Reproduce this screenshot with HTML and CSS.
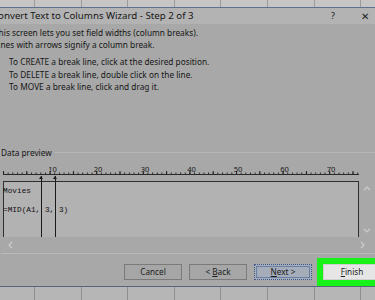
FILE: index.html
```html
<!DOCTYPE html>
<html lang="en">
<head>
  <meta charset="UTF-8" />
  <title>Convert Text to Columns Wizard</title>
  <link rel="stylesheet" href="styles.css">
</head>
<body>
  <!-- Planilha por trás do diálogo -->
  <div class="sheet sheet-top"></div>

  <div class="dialog">
    <div class="titlebar">
      <span class="title">Convert Text to Columns Wizard - Step 2 of 3</span>
      <span class="help">?</span>
      <span class="close">&#x2715;</span>
    </div>

    <div class="content">
      <p class="intro">This screen lets you set field widths (column breaks).<br>Lines with arrows signify a column break.</p>
      <ul class="howto">
        <li>To CREATE a break line, click at the desired position.</li>
        <li>To DELETE a break line, double click on the line.</li>
        <li>To MOVE a break line, click and drag it.</li>
      </ul>

      <div class="preview">
        <div class="preview-head"><span>Data preview</span><span class="head-line"></span></div>

        <svg class="ruler" width="356" height="19" viewBox="0 0 356 19">
          <defs>
            <pattern id="minor" width="4.66" height="19" patternUnits="userSpaceOnUse">
              <rect x="0" y="13.5" width="1" height="1.5" fill="#2a2a2a"/>
            </pattern>
            <pattern id="major" width="23.3" height="19" patternUnits="userSpaceOnUse">
              <rect x="0" y="12" width="1" height="3" fill="#1e1e1e"/>
            </pattern>
          </defs>
          <rect x="0" y="15" width="356" height="1" fill="#2a2a2a"/>
          <rect x="0" y="0" width="356" height="19" fill="url(#minor)"/>
          <rect x="0" y="0" width="356" height="19" fill="url(#major)"/>
          <g class="ruler-nums" text-anchor="middle">
            <text x="49.5" y="13">10</text>
            <text x="95" y="13">20</text>
            <text x="142" y="13">30</text>
            <text x="188.5" y="13">40</text>
            <text x="235" y="13">50</text>
            <text x="281.5" y="13">60</text>
            <text x="328" y="13">70</text>
          </g>
        </svg>

        <div class="grid-row">
          <div class="grid">
            <pre>Movies
=MID(A1, 3, 3)</pre>
            <span class="brk brk-8"></span>
            <span class="brk brk-11"></span>
          </div>
          <div class="vscroll">
            <svg width="8" height="6" viewBox="0 0 8 6"><path d="M1 5 L4 2 L7 5" fill="none" stroke="#cdcdcd" stroke-width="1.2"/></svg>
            <svg width="8" height="6" viewBox="0 0 8 6"><path d="M1 1 L4 4 L7 1" fill="none" stroke="#cdcdcd" stroke-width="1.2"/></svg>
          </div>
        </div>
        <div class="hscroll">
          <svg width="6" height="8" viewBox="0 0 6 8"><path d="M5 1 L2 4 L5 7" fill="none" stroke="#cdcdcd" stroke-width="1.2"/></svg>
          <svg width="6" height="8" viewBox="0 0 6 8"><path d="M1 1 L4 4 L1 7" fill="none" stroke="#cdcdcd" stroke-width="1.2"/></svg>
        </div>
      </div>
    </div>

    <div class="buttons">
      <button class="btn">Cancel</button>
      <button class="btn">&lt; <u>B</u>ack</button>
      <button class="btn btn-default"><u>N</u>ext &gt;</button>
      <button class="btn btn-finish"><u>F</u>inish</button>
    </div>
  </div>

  <div class="sheet sheet-bottom"></div>
</body>
</html>
```

FILE: styles.css
```css
:root {
  --dialog-bg: #a8a8a8;
  --title-bg: #b3b3b3;
  --text: #161616;
  --frame: #5f6f8c;
  --highlight: #19f219;
}
* { margin: 0; padding: 0; box-sizing: border-box; }
html, body { overflow: hidden; }
body {
  width: 375px;
  height: 300px;
  background: #b8b8b8;
  font-family: "Noto Sans", "Open Sans", sans-serif;
  color: var(--text);
}
/* Planilha ao fundo */
.sheet {
  background-color: #c6c6c6;
  background-image: repeating-linear-gradient(90deg, transparent 0 34px, #9c9c9c 34px 35px, transparent 35px 46.6px);
}
.sheet-top { height: 7px; }
.sheet-bottom {
  height: 13px;
  background-color: #b6b6b6;
  background-image: repeating-linear-gradient(90deg, transparent 0 34px, #8f8f8f 34px 35px, transparent 35px 46.6px);
}
/* Diálogo */
.dialog {
  width: 395px;
  margin-left: -10px;
  background: var(--dialog-bg);
  border-top: 1px solid var(--frame);
  border-bottom: 1px solid #56657e;
}
.titlebar {
  height: 16px;
  background: var(--title-bg);
  display: flex;
  align-items: center;
  padding: 0 0 1px 2px;
  font-size: 9.7px;
}
.title { flex: 1; }
.help { width: 10px; text-align: center; margin-right: 21px; font-size: 9px; }
.close { width: 12px; text-align: center; margin-right: 14px; font-size: 10px; color: #222; }
.content { padding: 3px 0 0 4px; font-size: 8.3px; }
.intro { line-height: 12px; }
.howto {
  list-style: none;
  margin: 5px 0 0 15px;
  line-height: 12.5px;
}
/* Pré-visualização */
.preview {
  margin: 53px 0 0 7px;
  border-bottom: 1px solid #b9b9b9;
}
.preview-head {
  display: flex;
  align-items: center;
  height: 12px;
}
.head-line {
  flex: 1;
  border-top: 1px solid #b6b6b6;
  margin-left: 3px;
}
.ruler { display: block; margin-left: 2px; }
.ruler-nums text {
  font-family: "Noto Sans", sans-serif;
  font-size: 7.6px;
  fill: #1a1a1a;
}
.grid-row { display: flex; margin-top: 3px; }
.grid {
  position: relative;
  width: 356px;
  height: 56px;
  margin-left: 2px;
  background: #b2b2b2;
  border: 1px solid #2f2f2f;
  border-bottom: none;
}
.grid pre {
  font-family: "Liberation Mono", "DejaVu Sans Mono", monospace;
  font-size: 7.77px;
  line-height: 19px;
  margin-left: -1px;
  color: #111;
}
.brk {
  position: absolute;
  top: -6px;
  bottom: 0;
  width: 1px;
  background: #1a1a1a;
}
.brk::before {
  content: "";
  position: absolute;
  top: 0;
  left: -2px;
  border-left: 2.5px solid transparent;
  border-right: 2.5px solid transparent;
  border-bottom: 3px solid #1a1a1a;
}
.brk-8 { left: 36.5px; }
.brk-11 { left: 50.5px; }
.vscroll {
  width: 16px;
  display: flex;
  flex-direction: column;
  justify-content: space-between;
  align-items: center;
  padding: 4px 0 3px;
}
.hscroll {
  height: 16px;
  display: flex;
  justify-content: space-between;
  align-items: center;
  padding: 0 19px 0 6px;
}
/* Botões */
.buttons {
  display: flex;
  justify-content: flex-end;
  gap: 7px;
  padding: 10px 4px 6px 0;
}
.btn {
  width: 58px;
  height: 16px;
  font-family: "Noto Sans", "Open Sans", sans-serif;
  font-size: 8.2px;
  color: #1a1a1a;
  background: #a6a6a6;
  border: 1px solid #7a7a7a;
}
.btn-default {
  background: #a4adb9;
  border: 1px dotted #3d5684;
  outline: 1px solid #6a7fa3;
  outline-offset: -3px;
}
.btn-finish {
  margin-left: 4px;
  background: #e6e6e6;
  border-color: #cfcfcf;
  outline: 6px solid var(--highlight);
}
```
